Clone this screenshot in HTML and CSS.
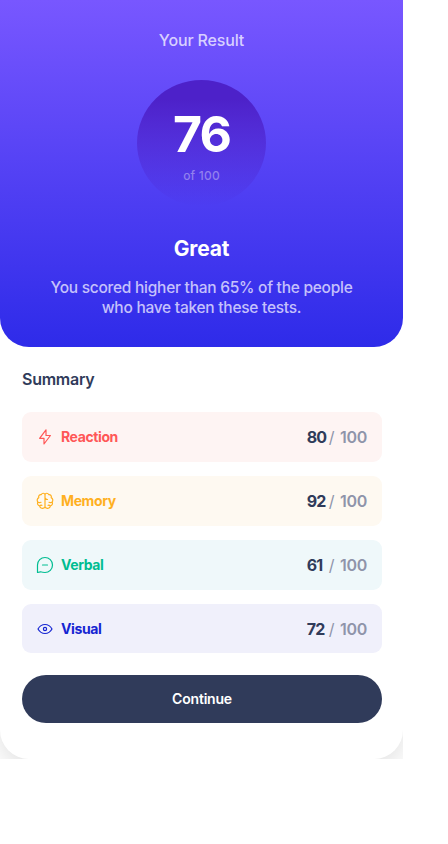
FILE: index.html
```html
<!DOCTYPE html>
<html lang="en">
<head>
<meta charset="utf-8">
<meta name="viewport" content="width=device-width, initial-scale=1">
<title>Results summary</title>
<link rel="stylesheet" href="styles.css">
</head>
<body>
<main class="frame">
<div class="card">
  <section class="result">
    <h1 class="result-title">Your Result</h1>
    <div class="score"><strong class="score-value">76</strong><span class="score-total">of 100</span></div>
    <h2 class="grade">Great</h2>
    <p class="message">You scored higher than 65% of the people<br>who have taken these tests.</p>
  </section>
  <section class="summary">
    <h2 class="summary-title">Summary</h2>
    <ul class="list">
      <li class="item reaction">
        <svg class="icon" viewBox="0 0 20 20"><path d="M11 7.800V2.800L4.600 11.300H9V17L15.400 8.500H11Z"/></svg>
        <span class="name">Reaction</span><span class="points"><b>80</b><i>/</i><span>100</span></span>
      </li>
      <li class="item memory">
        <svg class="icon" viewBox="0 0 20 20"><path d="M10 3.500C9.500 1.800 7 1.800 6.300 3.600C4.400 3.300 3.200 5 3.800 6.600C2 7.400 1.800 9.800 2.800 11C2 12.800 3 14.500 4.600 14.900C4.900 16.900 7 17.700 8.300 17.200C9.400 17 10 16.200 10 15.500ZM10 3.500C10.500 1.800 13 1.800 13.700 3.600C15.600 3.300 16.800 5 16.200 6.600C18 7.400 18.200 9.800 17.200 11C18 12.800 17 14.500 15.400 14.900C15.100 16.900 13 17.700 11.700 17.200C10.600 17 10 16.200 10 15.500M2.800 11Q4.300 12.200 6 11.300M6.900 14.300Q5.500 14 4.600 14.900M10 6.700Q10.600 8.500 12.500 8.500M17.200 11Q15.700 12.200 14 11.300M13.100 14.300Q14.500 14 15.400 14.900"/></svg>
        <span class="name">Memory</span><span class="points"><b>92</b><i>/</i><span>100</span></span>
      </li>
      <li class="item verbal">
        <svg class="icon" viewBox="0 0 20 20"><path d="M7.500 10h5M10 17.500A7.500 7.500 0 1 0 2.500 10V17.500L5.500 16.800Q7.600 17.500 10 17.500Z"/></svg>
        <span class="name">Verbal</span><span class="points"><b>61</b><i>/</i><span>100</span></span>
      </li>
      <li class="item visual">
        <svg class="icon" viewBox="0 0 20 20"><circle cx="10" cy="10" r="1.6"/><path d="M17 10c-1.400 2.500-3.800 4.500-7 4.500S4.400 12.500 3 10C4.400 7.500 7 5.500 10 5.500S15.600 7.500 17 10Z"/></svg>
        <span class="name">Visual</span><span class="points"><b>72</b><i>/</i><span>100</span></span>
      </li>
    </ul>
    <button class="continue" type="button">Continue</button>
  </section>
</div>
</main>
</body>
</html>
```
FILE: styles.css
```css
* { box-sizing: border-box; }
body { margin: 0; background: #fff; font-family: Inter, "Liberation Sans", sans-serif; }
h1, h2, p, ul { margin: 0; padding: 0; }
.frame { width: 403px; height: 759px; overflow: hidden; }
.card { height: 759px; border-radius: 0 0 29px 29px; background: #fff; box-shadow: 0 8px 28px rgba(0, 0, 0, .13); }
.result { height: 347px; padding-top: 30px; border-radius: 0 0 29px 29px; background: linear-gradient(#7857ff, #2e2be9); color: #fff; display: flex; flex-direction: column; align-items: center; text-align: center; }
.result-title { font-size: 16px; line-height: 20px; font-weight: 500; letter-spacing: -.15px; color: #d8d0ff; }
.score { width: 129px; height: 126px; margin-top: 30px; padding-top: 28px; border-radius: 50%; background: linear-gradient(#4d21c9 15%, rgba(77, 33, 201, 0)); display: flex; flex-direction: column; align-items: center; }
.score-value { font-size: 50px; line-height: 52px; font-weight: 700; letter-spacing: -2px; }
.score-total { margin-top: 8px; font-size: 12px; line-height: 16px; font-weight: 500; letter-spacing: .2px; color: #9180ee; }
.grade { margin-top: 30px; font-size: 21px; line-height: 26px; font-weight: 700; letter-spacing: -.2px; }
.message { margin-top: 16px; font-size: 15.5px; line-height: 20px; font-weight: 500; color: #c5c1fb; white-space: nowrap; letter-spacing: -.26px; }
.summary { padding: 22px 21px 0 22px; }
.summary-title { font-size: 16px; line-height: 20px; font-weight: 600; letter-spacing: -.25px; color: #303b5a; }
.list { margin-top: 23px; display: grid; gap: 14px; list-style: none; }
.item { height: 50px; padding: 0 15px 0 13px; border-radius: 9px; display: flex; align-items: center; }
.item:last-child { height: 49px; }
.icon { width: 20px; height: 20px; margin-right: 6px; fill: none; stroke: currentColor; stroke-width: 1.2; stroke-linecap: round; stroke-linejoin: round; }
.name { padding-bottom: 1px; font-size: 14px; font-weight: 700; letter-spacing: -.4px; }
.points { margin-left: auto; display: flex; font-size: 16px; color: #8f94aa; letter-spacing: -.5px; }
.points b { width: 19px; color: #303b5a; font-weight: 700; white-space: nowrap; letter-spacing: -.9px; }
.points i { margin: 0 6px 0 3px; font-style: normal; }
.points span { font-weight: 600; letter-spacing: -.3px; }
.reaction { color: #ff5757; background: #fef4f3; }
.memory { color: #ffb01f; background: #fef9f1; }
.verbal { color: #00bd91; background: #eff8fa; }
.visual { color: #1525d2; background: #f0f0fb; }
.continue { display: block; width: 360px; height: 48px; margin-top: 22px; padding: 0 0 2px; border: 0; border-radius: 24px; background: #303b5a; color: #fff; font: 600 14px Inter, sans-serif; letter-spacing: -.2px; }
```
